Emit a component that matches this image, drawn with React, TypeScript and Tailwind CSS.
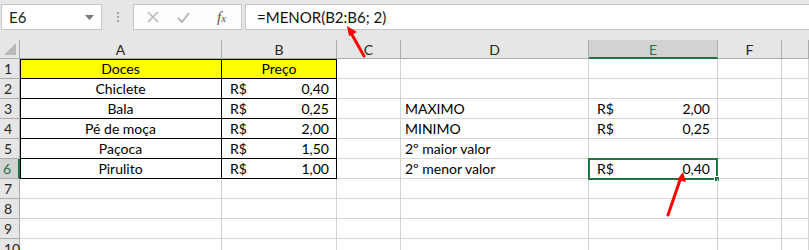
import { Fragment } from "react";

type Row = {
  n: number;
  a?: string;
  b?: string;
  d?: string;
  e?: string;
  head?: boolean;
};

const rows: Row[] = [
  { n: 1, a: "Doces", b: "Preço", head: true },
  { n: 2, a: "Chiclete", b: "0,40" },
  { n: 3, a: "Bala", b: "0,25", d: "MAXIMO", e: "2,00" },
  { n: 4, a: "Pé de moça", b: "2,00", d: "MINIMO", e: "0,25" },
  { n: 5, a: "Paçoca", b: "1,50", d: "2º maior valor" },
  { n: 6, a: "Pirulito", b: "1,00", d: "2º menor valor", e: "0,40" },
  { n: 7 },
  { n: 8 },
  { n: 9 },
  { n: 10 },
];

const letters = ["A", "B", "C", "D", "E", "F", ""];

function Money({ value }: { value: string }) {
  return (
    <div className="flex w-full justify-between pl-[8px] pr-[7px]">
      <span>R$</span>
      <span>{value}</span>
    </div>
  );
}

function FormulaBar() {
  return (
    <div className="flex h-[40px] items-start bg-[#e6e6e6] pt-[4px]">
      {/* name box */}
      <div className="ml-[1px] flex h-[26px] w-[101px] items-center justify-between border border-[#c6c6c6] bg-white pl-[7px] pr-[7px] text-[15px] text-[#222]">
        <span>E6</span>
        <svg width="9" height="5" viewBox="0 0 9 5">
          <path d="M0 0h9L4.5 5z" fill="#777" />
        </svg>
      </div>
      <div className="flex h-[26px] w-[31px] flex-col items-center justify-center gap-[2px]">
        <span className="h-[2px] w-[2px] bg-[#a0a0a0]" />
        <span className="h-[2px] w-[2px] bg-[#a0a0a0]" />
        <span className="h-[2px] w-[2px] bg-[#a0a0a0]" />
      </div>
      {/* cancel / enter / insert function */}
      <div className="flex h-[26px] w-[109px] items-center border border-[#c6c6c6] bg-[#fdfdfd]">
        <svg className="ml-[13px]" width="12" height="12" viewBox="0 0 12 12">
          <path d="M1 1l10 10M11 1L1 11" stroke="#b9b9b9" strokeWidth="1.6" />
        </svg>
        <svg className="ml-[18px]" width="13" height="11" viewBox="0 0 13 11">
          <path d="M1 6l4 4L12 1" stroke="#b9b9b9" strokeWidth="2" fill="none" />
        </svg>
        <span className="ml-[27px] font-['Liberation_Serif',serif] text-[15px] italic text-[#555]">
          f<span className="text-[11px]">x</span>
        </span>
      </div>
      <div className="ml-[3px] flex h-[26px] flex-1 items-center border-y border-l border-[#c6c6c6] bg-white pl-[11px] text-[15px] text-[#111]">
        =MENOR(B2:B6; 2)
      </div>
    </div>
  );
}

export default function App() {
  return (
    <div className="relative h-[250px] w-[809px] overflow-hidden bg-white font-[Lato,sans-serif]">
      <FormulaBar />

      <div className="grid grid-cols-[20px_202px_115px_64px_188px_129px_64px_1fr] text-[14px] text-black">
        {/* column headers */}
        <div className="relative h-[19px] border-b border-r border-[#ababab] bg-[#e6e6e6]">
          <svg className="absolute bottom-[3px] right-[3px]" width="12" height="12" viewBox="0 0 12 12">
            <path d="M12 0v12H0z" fill="#b8b8b8" />
          </svg>
        </div>
        {letters.map((l, i) => (
          <div
            key={i}
            className={
              l === "E"
                ? "flex h-[19px] items-center justify-center border-b-2 border-r border-b-[#217346] border-r-[#ababab] bg-[#d2d2d2] pt-[1px] text-[#217346]"
                : "flex h-[19px] items-center justify-center border-b border-r border-[#ababab] bg-[#e6e6e6] text-[#262626]"
            }
          >
            {l}
          </div>
        ))}

        {rows.map((r) => {
          const inTable = r.n <= 6;
          const tableCell = "border-b border-r border-black";
          const grid = "border-b border-r border-[#d4d4d4]";
          return (
            <Fragment key={r.n}>
              <div
                className={
                  r.n === 6
                    ? "h-[20px] border-b border-r-2 border-b-[#ababab] border-r-[#217346] bg-[#d2d2d2] pl-[3px] leading-[20px] text-[#217346]"
                    : "h-[20px] border-b border-r border-[#ababab] bg-[#e6e6e6] pl-[4px] leading-[20px] text-[#262626]"
                }
              >
                {r.n}
              </div>
              <div
                className={`h-[20px] text-center leading-[20px] ${inTable ? tableCell : grid} ${
                  r.head ? "bg-[#ffff00] shadow-[inset_1px_1px_0_#000]" : inTable ? "shadow-[inset_1px_0_0_#000]" : ""
                }`}
              >
                {r.a}
              </div>
              <div
                className={`flex h-[20px] leading-[20px] ${inTable ? tableCell : grid} ${
                  r.head ? "justify-center bg-[#ffff00] shadow-[inset_0_1px_0_#000]" : ""
                }`}
              >
                {r.head ? r.b : r.b ? <Money value={r.b} /> : null}
              </div>
              <div className={`h-[20px] ${grid}`} />
              <div className={`h-[20px] pl-[4px] leading-[20px] ${grid}`}>{r.d}</div>
              <div className={`relative flex h-[20px] leading-[20px] ${grid}`}>
                {r.e ? <Money value={r.e} /> : null}
                {r.n === 6 && (
                  <div className="absolute -left-[1px] -top-[1px] h-[22px] w-[130px] border-2 border-[#217346]">
                    <span className="absolute -bottom-[4px] -right-[4px] h-[6px] w-[6px] border border-white bg-[#217346]" />
                  </div>
                )}
              </div>
              <div className={`h-[20px] ${grid}`} />
              <div className={`h-[20px] ${grid}`} />
            </Fragment>
          );
        })}
      </div>

      {/* red annotation arrows */}
      <svg className="pointer-events-none absolute left-0 top-0" width="809" height="250" viewBox="0 0 809 250">
        <path d="M364 56L351 33" stroke="#ff0000" strokeWidth="3" strokeLinecap="round" />
        <path d="M347 26l10 6-8 4z" fill="#ff0000" />
        <path d="M668 215L680 180" stroke="#ff0000" strokeWidth="3" strokeLinecap="round" />
        <path d="M683 172l3 10-9-2z" fill="#ff0000" />
      </svg>
    </div>
  );
}
